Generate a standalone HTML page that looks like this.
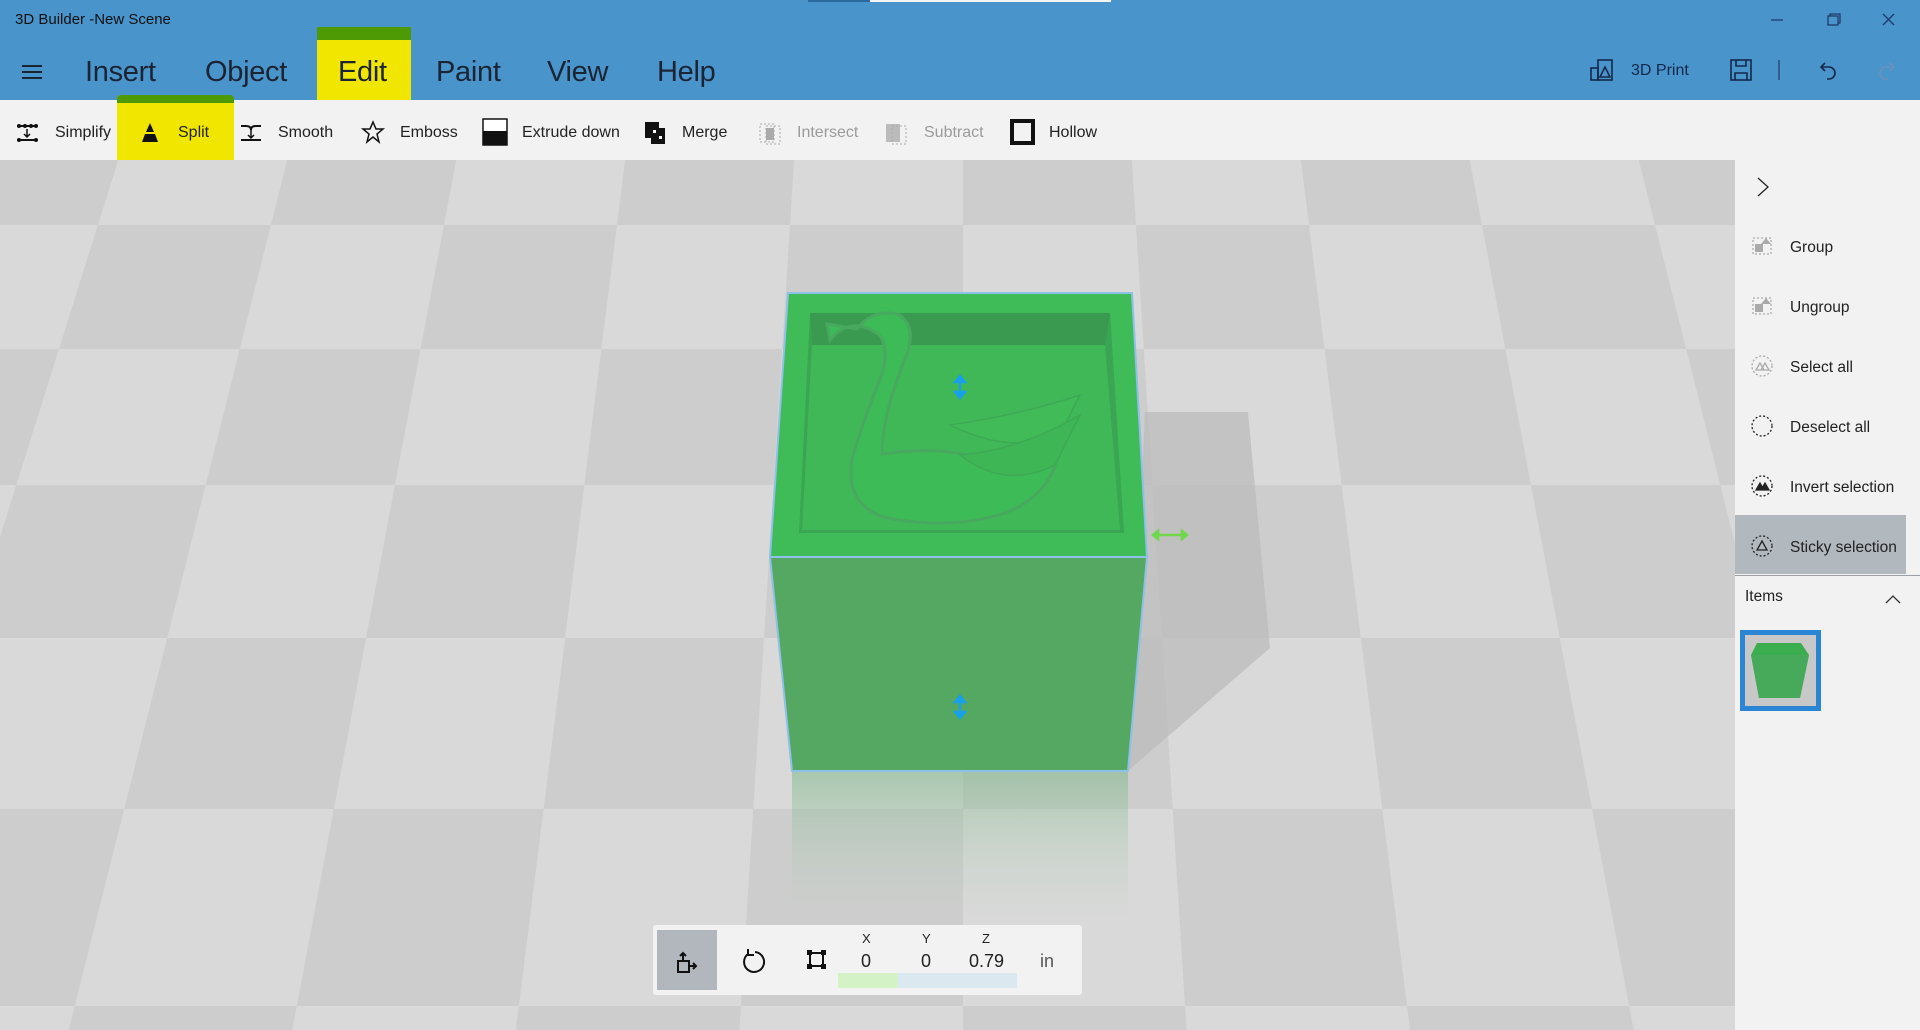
<!DOCTYPE html>
<html><head><meta charset="utf-8"><style>
*{margin:0;padding:0;box-sizing:border-box}
html{overflow:hidden;width:1920px;height:1030px}
body{width:1920px;height:1030px;overflow:hidden;position:relative;font-family:"Liberation Sans",sans-serif;background:#d4d4d4}
.abs{position:absolute}
#hdr{left:0;top:0;width:1920px;height:100px;background:#4a94cc}
.menu{position:absolute;top:52px;font-size:29px;color:#1b2433;line-height:40px;letter-spacing:-0.3px}
#tb{left:0;top:100px;width:1920px;height:60px;background:#f2f2f2}
.ti{position:absolute;top:124px;font-size:16px;color:#222;line-height:18px}
.dis{color:#9a9a9a}
.rp{position:absolute;left:1790px;font-size:15.5px;color:#222;line-height:18px}
</style></head><body>
<div id="hdr" class="abs"></div>
<div class="abs" style="left:808px;top:0;width:62px;height:2px;background:#2a6aa0"></div>
<div class="abs" style="left:870px;top:0;width:241px;height:2px;background:#f4f4f4"></div>
<div class="abs" style="left:15px;top:11px;font-size:15px;color:#111">3D Builder -New Scene</div>
<svg class="abs" style="left:1760px;top:6px" width="160" height="30">
<line x1="11" y1="14" x2="23" y2="14" stroke="#1e3a6a" stroke-width="1.3"/>
<rect x="68" y="10" width="10" height="9" fill="none" stroke="#1e3a6a" stroke-width="1.3"/><path d="M70 10V8h10v9h-2" fill="none" stroke="#1e3a6a" stroke-width="1.3"/>
<path d="M123 8l11 11M134 8l-11 11" stroke="#1e3a6a" stroke-width="1.3"/>
</svg>
<div class="abs" style="left:22px;top:65px;width:20px;height:2px;background:#1b2433;box-shadow:0 6px 0 #1b2433,0 12px 0 #1b2433"></div>
<div class="abs" style="left:317px;top:27px;width:94px;height:73px;background:#f1e600"></div>
<div class="abs" style="left:317px;top:27px;width:94px;height:13px;background:#4e9a05"></div>
<div class="menu" style="left:85px">Insert</div>
<div class="menu" style="left:205px">Object</div>
<div class="menu" style="left:338px">Edit</div>
<div class="menu" style="left:436px">Paint</div>
<div class="menu" style="left:547px">View</div>
<div class="menu" style="left:657px">Help</div>
<svg class="abs" style="left:1585px;top:55px" width="335" height="35" fill="none" stroke="#14284a" stroke-width="1.6">
<rect x="6" y="13" width="7" height="12"/><rect x="13" y="5" width="14" height="20"/><path d="M15 22l5-10 5 10z"/>
<rect x="146" y="5" width="20" height="20"/><path d="M151 5v6h10V5M150 25v-7h12v7"/>
<line x1="194" y1="5" x2="194" y2="25" stroke-width="1"/>
<path d="M240 8l-4 4 4 4M236 12h8a6 6 0 0 1 0 12h-2" />
<path d="M305 8l4 4-4 4M309 12h-8a6 6 0 0 0 0 12h2" stroke="#6a93b8"/>
</svg>
<div class="abs" style="left:1631px;top:62px;font-size:16px;color:#14284a">3D Print</div>
<div id="tb" class="abs"></div>
<div class="abs" style="left:117px;top:95px;width:117px;height:77px;background:#f1e600;border-radius:4px 8px 12px 10px"></div>
<div class="abs" style="left:117px;top:95px;width:117px;height:8px;background:#4e9a05;border-radius:4px 4px 0 0"></div>
<svg class="abs" style="left:0;top:116px" width="1100" height="34" fill="#111">
<g transform="translate(17,7)"><rect x="0" y="2" width="20" height="2"/><rect x="0" y="16" width="20" height="2"/><circle cx="2" cy="3" r="2"/><circle cx="8" cy="3" r="2"/><circle cx="14" cy="3" r="2"/><circle cx="19" cy="3" r="2"/><circle cx="2" cy="17" r="2"/><circle cx="19" cy="17" r="2"/><path d="M10 6v8M7 11l3 3 3-3" stroke="#111" stroke-width="1.5" fill="none"/></g>
<g transform="translate(141,7)"><path d="M9 0l4 9H5z"/><path d="M4 11h10l3 8H1z"/></g>
<g transform="translate(241,7)"><path d="M0 3h5q5 0 5 4 0-4 5-4h5" stroke="#111" stroke-width="2" fill="none"/><rect x="0" y="16" width="20" height="2"/><path d="M10 7v8M7 12l3 3 3-3" stroke="#111" stroke-width="1.5" fill="none"/></g>
<path transform="translate(362,5)" d="M11 1l3 7h7l-6 5 2 8-6-5-6 5 2-8-6-5h7z" fill="none" stroke="#111" stroke-width="1.5"/>
<rect x="483" y="3" width="24" height="26" fill="#fff" stroke="#111" stroke-width="1.5"/><rect x="483" y="15" width="24" height="14"/>
<g transform="translate(645,6)"><rect x="0" y="0" width="14" height="16"/><rect x="6" y="6" width="14" height="16"/><rect x="8" y="8" width="3" height="3" fill="#fff"/><rect x="14" y="14" width="3" height="3" fill="#fff"/></g>
<g transform="translate(760,6)" stroke="#aaa" fill="none" stroke-dasharray="2 2"><rect x="0" y="2" width="14" height="18"/><rect x="6" y="4" width="14" height="18"/><rect x="6" y="6" width="8" height="12" fill="#aaa" stroke="none"/></g>
<g transform="translate(886,6)" stroke="#aaa" fill="none" stroke-dasharray="2 2"><rect x="0" y="2" width="14" height="18" fill="#bbb" stroke="none"/><rect x="6" y="4" width="14" height="18"/></g>
<rect x="1012" y="5" width="21" height="22" fill="none" stroke="#111" stroke-width="4"/>
</svg>
<div class="ti" style="left:55px">Simplify</div>
<div class="ti" style="left:178px">Split</div>
<div class="ti" style="left:278px">Smooth</div>
<div class="ti" style="left:400px">Emboss</div>
<div class="ti" style="left:522px">Extrude down</div>
<div class="ti" style="left:682px">Merge</div>
<div class="ti dis" style="left:797px">Intersect</div>
<div class="ti dis" style="left:924px">Subtract</div>
<div class="ti" style="left:1049px">Hollow</div>
<svg id="vp" class="abs" style="left:0;top:160px" width="1735" height="870" viewBox="0 160 1735 870">
<g id="floor"></g>
<polygon points="1145,412 1248,412 1270,648 1129,770" fill="#bdbdbd" opacity="0.8"/>
<defs><linearGradient id="refl" x1="0" y1="0" x2="0" y2="1"><stop offset="0" stop-color="#7fb88a" stop-opacity="0.55"/><stop offset="1" stop-color="#c9d4c9" stop-opacity="0"/></linearGradient></defs>
<polygon points="792,770 1128,770 1128,930 792,930" fill="url(#refl)"/>
<polygon points="770,557 1147,557 1128,771 792,771" fill="#55a862" stroke="#8ec0e8" stroke-width="2"/>
<polygon points="788,293 1132,293 1147,557 770,557" fill="#3fbb58" stroke="#8ec0e8" stroke-width="2"/>
<polygon points="810,313 1110,313 1124,533 799,533" fill="#3aa552"/>
<polygon points="812,345 1105,345 1120,530 802,530" fill="#40b858"/>
<polygon points="810,313 812,345 1105,345 1110,313" fill="#3a9a50"/>
<path d="M830 340 q20 -25 48 -6 q12 12 4 40 q-20 50 -30 85 q-8 50 40 60 q60 10 110 -5 q60 -20 60 -90 q-30 60 -70 40 q-40 -20 -110 -10 q0 -40 25 -100 q10 -30 -10 -40 q-25 -5 -40 15 l-30 -5 z" fill="#3dbb56" stroke="#48a860" stroke-width="3"/>
<path d="M950 425 q70 -10 130 -30 l-20 40 q-50 20 -110 -10z" fill="#41bb58" stroke="#3ea954" stroke-width="1.5"/>
<path d="M960 455 q60 -5 120 -40 l-25 50 q-50 25 -95 -10z" fill="#3fb656" stroke="#3ea954" stroke-width="1.5"/>
<g fill="#1aa0e8" stroke="#1aa0e8" stroke-width="2.5"><path d="M960 379v16"/><path d="M955 382l5-6 5 6zM955 392l5 6 5-6z"/><path d="M960 699v16"/><path d="M955 702l5-6 5 6zM955 712l5 6 5-6z"/></g>
<g stroke="#6ed84a" fill="#6ed84a" stroke-width="2.5"><path d="M1156 535h28"/><path d="M1158 531l-5 4 5 4zM1182 531l5 4-5 4z"/></g>
</svg>
<div class="abs" style="left:653px;top:925px;width:429px;height:70px;background:#f2f2f2;border-radius:3px"></div>
<div class="abs" style="left:657px;top:930px;width:60px;height:60px;background:#b1b7bc"></div>
<div class="abs" style="left:838px;top:973px;width:60px;height:15px;background:#d3f3c7"></div>
<div class="abs" style="left:898px;top:973px;width:119px;height:15px;background:#dbe8f0"></div>
<svg class="abs" style="left:653px;top:925px" width="429" height="70" fill="none" stroke="#111" stroke-width="2">
<rect x="25" y="36" width="11" height="11"/><path d="M30 36v-8M27 31l3-3 3 3M36 41h6M40 38l3 3-3 3"/>
<path d="M102 27a10 10 0 1 1 -7 2M95 24v6h6" />
<rect x="157" y="28" width="13" height="13"/><g fill="#111" stroke="none"><rect x="154" y="25" width="5" height="5"/><rect x="168" y="25" width="5" height="5"/><rect x="154" y="39" width="5" height="5"/><rect x="168" y="39" width="5" height="5"/></g>
</svg>
<div class="abs" style="left:862px;top:931px;font-size:13px;color:#222">X</div>
<div class="abs" style="left:922px;top:931px;font-size:13px;color:#222">Y</div>
<div class="abs" style="left:982px;top:931px;font-size:13px;color:#222">Z</div>
<div class="abs" style="left:861px;top:951px;font-size:18px;color:#222">0</div>
<div class="abs" style="left:921px;top:951px;font-size:18px;color:#222">0</div>
<div class="abs" style="left:969px;top:951px;font-size:18px;color:#222">0.79</div>
<div class="abs" style="left:1040px;top:951px;font-size:18px;color:#555">in</div>
<div class="abs" style="left:1735px;top:160px;width:185px;height:870px;background:#f2f2f2"></div>
<div class="abs" style="left:1735px;top:515px;width:171px;height:59px;background:#b1b8be"></div>
<div class="abs" style="left:1735px;top:575px;width:185px;height:1px;background:#9aa0a6"></div>
<svg class="abs" style="left:1745px;top:170px" width="175" height="400" fill="none" stroke-width="1.3">
<path d="M13 8l10 9-10 9" stroke="#222"/>
<g stroke="#aaa" stroke-dasharray="2 2"><rect x="8" y="68" width="18" height="16"/><rect x="8" y="128" width="18" height="16"/><circle cx="17" cy="196" r="10"/></g>
<g fill="#aaa"><rect x="10" y="74" width="8" height="8"/><path d="M16 74l5-6 5 6z"/><rect x="10" y="134" width="8" height="8"/><path d="M16 134l5-6 5 6z"/></g>
<path d="M11 200l4-7 4 7zM16 200l4-7 4 7z" stroke="#aaa"/>
<circle cx="17" cy="256" r="10" stroke="#222" stroke-dasharray="2 2"/>
<circle cx="17" cy="316" r="10" stroke="#222" stroke-dasharray="2 2"/><path d="M11 320l4-7 4 7zM16 320l4-7 4 7z" fill="#222" stroke="#222"/>
<circle cx="17" cy="376" r="10" stroke="#222" stroke-dasharray="2 2"/><path d="M12 380l5-9 5 9z" stroke="#222"/>
</svg>
<div class="rp dis" style="top:239px">Group</div>
<div class="rp dis" style="top:299px">Ungroup</div>
<div class="rp dis" style="top:359px">Select all</div>
<div class="rp" style="top:419px">Deselect all</div>
<div class="rp" style="top:479px">Invert selection</div>
<div class="rp" style="top:539px">Sticky selection</div>
<div class="abs" style="left:1745px;top:588px;font-size:15.5px;color:#222">Items</div>
<svg class="abs" style="left:1884px;top:592px" width="20" height="14"><path d="M2 11l7-7 7 7" fill="none" stroke="#333" stroke-width="1.3"/></svg>
<div class="abs" style="left:1740px;top:630px;width:81px;height:81px;background:#c8c8c8;border:5px solid #2a86d4"></div>
<svg class="abs" style="left:1745px;top:635px" width="71" height="71"><polygon points="6,20 12,8 56,8 64,20 55,63 14,63" fill="#3aae4f"/><polygon points="6,20 64,20 55,63 14,63" fill="#47a95a"/></svg>
<script>
(function(){
var g=document.getElementById('floor');
var rows=[100,160,225,349,485,638,809,1006,1030];
function s(y){return 171+(y-193)*0.0628;}
function x(k,y){return 963+k*s(y);}
var out='';
for(var r=0;r<rows.length-1;r++){var y0=rows[r],y1=rows[r+1];
for(var k=-8;k<6;k++){var c=((r+k)%2+2)%2?'#cdcdcd':'#d9d9d9';
out+='<polygon points="'+x(k,y0)+','+y0+' '+x(k+1,y0)+','+y0+' '+x(k+1,y1)+','+y1+' '+x(k,y1)+','+y1+'" fill="'+c+'"/>';}}
g.innerHTML=out;})();
</script>
</body></html>
